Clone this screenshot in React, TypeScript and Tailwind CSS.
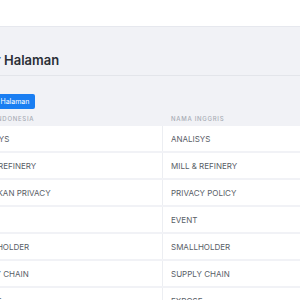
import React from "react";

const rows: [string, string][] = [
  ["ANALISYS", "ANALISYS"],
  ["MILL & REFINERY", "MILL & REFINERY"],
  ["KEBIJAKAN PRIVACY", "PRIVACY POLICY"],
  ["EVENT", "EVENT"],
  ["SMALLHOLDER", "SMALLHOLDER"],
  ["SUPPLY CHAIN", "SUPPLY CHAIN"],
  ["EXPOSE", "EXPOSE"],
];

export default function App() {
  return (
    <div
      className="w-[300px] h-[300px] overflow-hidden bg-[#f1f2f6]"
      style={{ fontFamily: "Inter, 'Noto Sans', sans-serif" }}
    >
      <div className="h-[27px] bg-white border-b border-[#e6e8ee]" />
      <div className="-ml-[38px] w-[400px]">
        <div className="h-[49px] flex items-end pb-[8px] border-b border-[#e3e5ea]">
          <h1 className="text-[13px] font-semibold text-[#2b2f36] leading-none">Daftar Halaman</h1>
        </div>
        <div className="pt-[10px]">
          <button className="ml-[4px] h-[15px] px-[6px] rounded-[2px] bg-[#1a7ef2] text-white text-[7px] leading-none">
            Tambah Halaman
          </button>
        </div>
        <div className="flex h-[16px] items-center">
          <div className="w-[201px] pl-[9px] text-[6px] tracking-[0.12em] text-[#a8acb5] font-medium">NAMA INDONESIA</div>
          <div className="pl-[8px] text-[6px] tracking-[0.12em] text-[#a8acb5] font-medium">NAMA INGGRIS</div>
        </div>
        <div className="flex flex-col gap-[2px]">
          {rows.map(([a, b]) => (
            <div key={b} className="flex h-[25px] bg-white items-center">
              <div className="w-[201px] h-full flex items-center pl-[8px] border-r border-[#eceef2] text-[8px] text-[#585d66]">
                {a}
              </div>
              <div className="pl-[8px] text-[8px] text-[#585d66]">{b}</div>
            </div>
          ))}
        </div>
      </div>
    </div>
  );
}
